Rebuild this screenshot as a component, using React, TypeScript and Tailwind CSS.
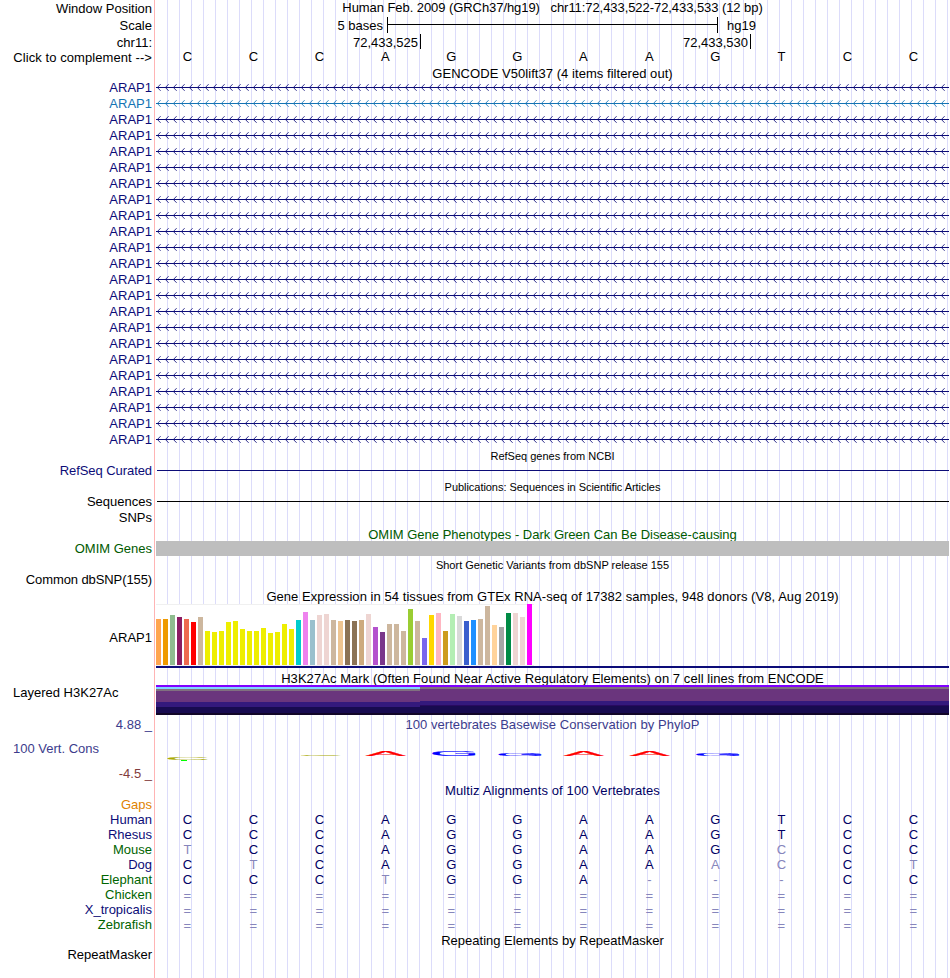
import React from "react";

type RowProps = {
  label?: string;
  labelClass?: string;
  className: string;
  children?: React.ReactNode;
};

type Species = {
  name: string;
  color: string;
  bases: string;
};

const reference = "CCCAGGAAGTCC";

const species: Species[] = [
  { name: "Human", color: "text-[#0c0c78]", bases: "CCCAGGAAGTCC" },
  { name: "Rhesus", color: "text-[#0c0c78]", bases: "CCCAGGAAGTCC" },
  { name: "Mouse", color: "text-[#006400]", bases: "TCCAGGAAGCCC" },
  { name: "Dog", color: "text-[#0c0c78]", bases: "CTCAGGAAACCT" },
  { name: "Elephant", color: "text-[#006400]", bases: "CCCTGGA---CC" },
  { name: "Chicken", color: "text-[#006400]", bases: "============" },
  { name: "X_tropicalis", color: "text-[#0c0c78]", bases: "============" },
  { name: "Zebrafish", color: "text-[#006400]", bases: "============" },
];

// [height, color] per tissue
const tissues: [number, string][] = [
  [46, "#ffa54f"], [46, "#ee9a00"], [50, "#8fbc8f"], [48, "#8b1c62"], [46, "#ee6a50"], [43, "#ff0000"],
  [48, "#cdb79e"], [34, "#eeee00"], [33, "#eeee00"], [34, "#eeee00"], [43, "#eeee00"], [44, "#eeee00"],
  [36, "#eeee00"], [34, "#eeee00"], [34, "#eeee00"], [37, "#eeee00"], [32, "#eeee00"], [33, "#eeee00"],
  [41, "#eeee00"], [36, "#eeee00"], [45, "#00cdcd"], [53, "#ee82ee"], [45, "#9ac0cd"], [50, "#eed5d2"],
  [51, "#eed5d2"], [45, "#cdb79e"], [44, "#eec591"], [45, "#8b7355"], [44, "#8b7355"], [45, "#cdaa7d"],
  [51, "#eed5d2"], [38, "#b452cd"], [33, "#7a378b"], [41, "#cdb79e"], [41, "#cdb79e"], [34, "#cdb79e"],
  [56, "#9acd32"], [44, "#cdb79e"], [27, "#7a67ee"], [50, "#ffd700"], [52, "#ffb6c1"], [34, "#cd9b1d"],
  [51, "#b4eeb4"], [49, "#d9d9d9"], [44, "#3a5fcd"], [45, "#1e90ff"], [46, "#cdb79e"], [59, "#cdb79e"],
  [40, "#ffd39b"], [38, "#a6a6a6"], [52, "#008b45"], [52, "#eed5d2"], [48, "#eed5d2"], [61, "#ff00ff"],
];

// squashed conservation letters: x, baseline, width, height
const logo = [
  { base: "C", x: 12, y: 27, w: 39, h: 3, color: "#aaaa00" },
  { base: "C", x: 145, y: 23, w: 39, h: 1, color: "#aaaa00" },
  { base: "A", x: 210, y: 23, w: 39, h: 5.6, color: "#ff0000" },
  { base: "G", x: 277, y: 23, w: 42, h: 5.6, color: "#0000ff" },
  { base: "G", x: 343, y: 23, w: 42, h: 3, color: "#0000ff" },
  { base: "A", x: 408, y: 23, w: 39, h: 5.6, color: "#ff0000" },
  { base: "A", x: 474, y: 23, w: 39, h: 5.6, color: "#ff0000" },
  { base: "G", x: 541, y: 23, w: 42, h: 2.1, color: "#0000ff" },
];

const glyphBox: Record<string, { left: number; width: number; height: number }> = {
  A: { left: 0, width: 66, height: 69 },
  C: { left: 5, width: 63, height: 71 },
  G: { left: 5, width: 66, height: 71 },
};

const arrowPath = Array.from({ length: 99 }, (_, i) => `M${i * 8 + 4.6} 5.2L${i * 8 + 1.4} 8.5L${i * 8 + 4.6} 11.8`).join("");

const Row: React.FC<RowProps> = ({ label, labelClass = "", className, children }) => (
  <div className={`flex ${className}`}>
    <div className={`flex w-[152px] shrink-0 items-center justify-end whitespace-pre ${labelClass}`}>{label}</div>
    <div className="ml-1 flex w-[793px] shrink-0 flex-col justify-center">{children}</div>
  </div>
);

const Title: React.FC<{ className: string; children: React.ReactNode }> = ({ className, children }) => (
  <Row className={className}>
    <div className="text-center whitespace-pre">{children}</div>
  </Row>
);

const Bases: React.FC<{ bases: string; className?: string }> = ({ bases, className = "" }) => (
  <div className={`-ml-[1.6px] flex ${className}`}>
    {bases.split("").map((base, i) => (
      <span key={i} className={`w-[66px] shrink-0 text-center ${base === reference[i] ? "" : "text-[#8686bc]"}`}>
        {base}
      </span>
    ))}
  </div>
);

const GeneRow: React.FC<{ light: boolean }> = ({ light }) => (
  <Row label="ARAP1" className="h-4" labelClass={light ? "text-[#1474b4]" : "text-[#0c0c78]"}>
    <svg width="793" height="16" className={light ? "text-[#1474b4]" : "text-[#0c0c78]"}>
      <rect x="0" y="8" width="793" height="1" fill="currentColor" />
      <path d={arrowPath} fill="none" stroke="currentColor" strokeWidth="0.85" />
    </svg>
  </Row>
);

const Expression: React.FC = () => (
  <div className="flex h-16 flex-col">
    <div className="flex h-[62px] w-[378px] items-end gap-0.5 border-t border-b border-[#f0f0f0] bg-white">
      {tissues.map(([height, color], i) => (
        <div key={i} className="w-[5px] shrink-0" style={{ height, backgroundColor: color, marginTop: -1 }} />
      ))}
    </div>
    <div className="h-0.5 w-full mt-auto bg-[#0c0c78]" />
  </div>
);

const Histone: React.FC = () => (
  <div className="flex flex-col">
    <div className="h-0.5 bg-[#8000ff]" />
    <div className="flex h-7">
      <div className="flex w-[264px] flex-col">
        <div className="h-0.5 bg-[#80d4ff]" />
        <div className="h-0.5 bg-[#80707f]" />
        <div className="h-[11px] bg-[#6a357d]" />
        <div className="h-[5px] bg-[#34197d]" />
        <div className="h-1.5 bg-[#180b50]" />
        <div className="h-0.5 bg-[#120628]" />
      </div>
      <div className="flex flex-1 flex-col">
        <div className="h-0.5 bg-[#80707f]" />
        <div className="h-3 bg-[#6a357d]" />
        <div className="h-1 bg-[#34197d]" />
        <div className="h-px bg-[#290a60]" />
        <div className="h-[7px] bg-[#180b50]" />
        <div className="h-0.5 bg-[#120628]" />
      </div>
    </div>
  </div>
);

const Conservation: React.FC = () => (
  <svg width="793" height="48" fontFamily="Liberation Sans, Arial, sans-serif" fontSize="100">
    {logo.map(({ base, x, y, w, h, color }) => {
      const box = glyphBox[base];
      const sx = w / box.width;
      return (
        <text
          key={x}
          fill={color}
          stroke={color}
          strokeWidth={base === "A" ? 2.5 : 2}
          transform={`translate(${x - box.left * sx} ${y}) scale(${sx} ${h / box.height})`}
        >
          {base}
        </text>
      );
    })}
    <rect x="25" y="27" width="6" height="1" fill="#00ff00" />
  </svg>
);

const App: React.FC = () => {
  return (
    <div className="relative h-[978px] w-[950px] overflow-hidden bg-white font-['Liberation_Sans',Arial,sans-serif] text-[13px] leading-[15px] text-black">
      {/* guide lines behind the tracks */}
      <div className="absolute top-0 left-[154px] h-full w-px bg-[#ffb4b4]" />
      <div className="absolute top-0 left-[167px] h-full w-[782px] bg-[repeating-linear-gradient(to_right,#dcdcfa_0px,#dcdcfa_1px,transparent_1px,transparent_12px)]" />

      <div className="relative flex flex-col">
        <Row label="Window Position" className="h-4">
          <div className="pb-0.5 text-center tracking-[-0.065px] whitespace-pre">
            Human Feb. 2009 (GRCh37/hg19)   chr11:72,433,522-72,433,533 (12 bp)
          </div>
        </Row>
        <Row label="Scale" className="h-[18px]">
          <div className="flex items-center">
            <span className="w-[227px] text-right">5 bases</span>
            <div className="ml-1 flex h-4 w-[331px] items-center border-x border-black pb-px">
              <div className="h-px w-full bg-black" />
            </div>
            <span className="ml-[9px]">hg19</span>
          </div>
        </Row>
        <Row label="chr11:" className="h-[15px]" labelClass="pt-0.5">
          <div className="flex items-center">
            <span className="w-[262px] pt-0.5 text-right">72,433,525</span>
            <div className="ml-0.5 h-[15px] w-px bg-black" />
            <span className="w-[327px] pt-0.5 text-right">72,433,530</span>
            <div className="ml-0.5 h-[15px] w-px bg-black" />
          </div>
        </Row>
        <Row label="Click to complement -->" className="h-[17px]" labelClass="tracking-[0.08px]">
          <Bases bases={reference} className="pb-0.5" />
        </Row>
        <Title className="h-[13px] pt-0.5 tracking-[0.05px]">GENCODE V50lift37 (4 items filtered out)</Title>
        {Array.from({ length: 23 }, (_, i) => (
          <GeneRow key={i} light={i === 1} />
        ))}

        <Title className="h-4 pt-0.5 text-[11px]">RefSeq genes from NCBI</Title>
        <Row label="RefSeq Curated" className="h-[15px]" labelClass="text-[#0c0c78] tracking-[-0.07px]">
          <div className="ml-px h-px bg-[#0c0c78]" />
        </Row>
        <Title className="h-4 pt-0.5 text-[11px] tracking-[-0.04px]">Publications: Sequences in Scientific Articles</Title>
        <Row label="Sequences" className="h-[15px]">
          <div className="ml-px h-px bg-black" />
        </Row>
        <Row label="SNPs" className="h-[17px]" />
        <Title className="h-[15px] pt-0.5 text-[#005a00]">OMIM Gene Phenotypes - Dark Green Can Be Disease-causing</Title>
        <Row label="OMIM Genes" className="h-[15px]" labelClass="text-[#005a00]">
          <div className="h-[15px] bg-[#bebebe]" />
        </Row>
        <Title className="h-[17px] pt-0.5 text-[11px]">Short Genetic Variants from dbSNP release 155</Title>
        <Row label="Common dbSNP(155)" className="h-[14px]" labelClass="pb-0.5 tracking-[-0.1px]" />
        <Title className="h-[17px] pt-0.5 tracking-[0.055px]">
          Gene Expression in 54 tissues from GTEx RNA-seq of 17382 samples, 948 donors (V8, Aug 2019)
        </Title>
        <Row label="ARAP1" className="h-16" labelClass="pt-0.5">
          <Expression />
        </Row>
        <Title className="h-[17px] pt-1 tracking-[0.06px]">
          H3K27Ac Mark (Often Found Near Active Regulatory Elements) on 7 cell lines from ENCODE
        </Title>
        <div className="flex h-[30px]">
          <div className="w-[139px] pl-[13px]">Layered H3K27Ac</div>
          <div className="ml-[17px] w-[793px]">
            <Histone />
          </div>
        </div>
        <Row label="4.88 _" className="h-[18px] text-[#3c3c8c]">
          <div className="text-center tracking-[0.04px]">100 vertebrates Basewise Conservation by PhyloP</div>
        </Row>
        <div className="flex h-12">
          <div className="flex w-[152px] flex-col justify-between pt-2">
            <span className="pl-[13px] text-[#3c3c8c]">100 Vert. Cons</span>
            <span className="text-right text-[#823c3c]">-4.5 _</span>
          </div>
          <div className="ml-1">
            <Conservation />
          </div>
        </div>
        <Title className="h-4 pt-0.5 tracking-[0.11px] text-[#000064]">Multiz Alignments of 100 Vertebrates</Title>
        <Row label="Gaps" className="h-[15px]" labelClass="text-[#e08200]" />
        {species.map(({ name, color, bases }) => (
          <Row key={name} label={name} className="h-[15px]" labelClass={color}>
            <Bases bases={bases} className={bases.startsWith("=") ? "pt-0.5" : "text-[#000064]"} />
          </Row>
        ))}
        <Title className="h-4">Repeating Elements by RepeatMasker</Title>
        <Row label="RepeatMasker" className="h-[14px]" labelClass="pb-0.5" />
      </div>
    </div>
  );
};

export default App;
